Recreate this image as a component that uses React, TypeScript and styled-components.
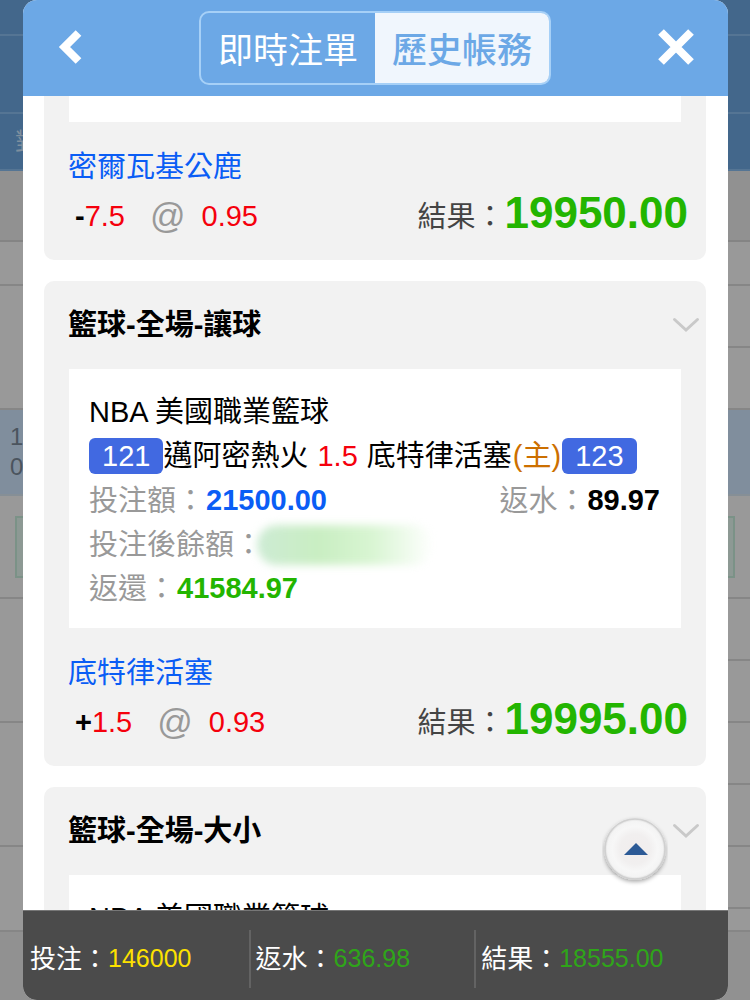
import React from "react";
import styled, { createGlobalStyle } from "styled-components";

const GlobalStyle = createGlobalStyle`
  *, *::before, *::after { box-sizing: border-box; }
  body {
    margin: 0;
    font-family: "Liberation Sans", "Noto Sans CJK TC", sans-serif;
    font-size: 29px;
    line-height: 44px;
    color: #000;
    background: #999;
  }
  button { font: inherit; color: inherit; padding: 0; border: 0; background: none; cursor: pointer; }
  h2, p, dl, dd, dt { margin: 0; font-size: inherit; font-weight: inherit; }
`;

const Screen = styled.div`
  position: relative;
  height: 100vh;
  overflow: hidden;
`;

/* Dimmed page behind the dialog */
const Backdrop = styled.div`
  display: grid;
  grid-template-columns: 1fr 1fr;
  height: 100%;
  align-items: start;
`;

const BackdropColumn = styled.div`
  display: flex;
  flex-direction: column;
`;

const tones = {
  blue: { bg: "#43678b", line: "#557594" },
  grey: { bg: "#919191", line: "#848484" },
  plain: { bg: "#999999", line: "#868686" },
  picked: { bg: "#808e9d", line: "#868f96" },
};

const BackdropRow = styled.div<{ $height: number; $tone: keyof typeof tones }>`
  display: flex;
  flex-direction: column;
  justify-content: center;
  align-items: flex-start;
  height: ${(p) => p.$height}px;
  background: ${(p) => tones[p.$tone].bg};
  border-bottom: 2px solid ${(p) => tones[p.$tone].line};
  font-size: 24px;
  line-height: 30px;
  color: #4b545e;
`;

const BackdropText = styled.span<{ $indent: number; $faded?: boolean }>`
  margin-left: ${(p) => p.$indent}px;
  white-space: nowrap;
  color: ${(p) => (p.$faded ? "#7f8f9e" : "inherit")};
`;

const BackdropBox = styled.div`
  align-self: stretch;
  height: 62px;
  margin: 0 15px;
  border: 2px solid #7b9287;
  background: #8d9994;
`;

const Dialog = styled.section`
  position: absolute;
  inset: 0 22px 0 23px;
  display: flex;
  flex-direction: column;
  overflow: hidden;
  border-radius: 14px;
  background: #fff;
`;

const Header = styled.header`
  display: grid;
  grid-template-columns: 1fr auto 1fr;
  align-items: center;
  flex: none;
  height: 96px;
  padding: 0 33px 0 32px;
  background: #6ca8e6;
`;

const IconButton = styled.button<{ $end?: boolean }>`
  display: flex;
  justify-self: ${(p) => (p.$end ? "end" : "start")};
`;

const Segments = styled.div`
  display: flex;
  height: 74px;
  border: 2px solid #a6d0f7;
  border-radius: 10px;
  overflow: hidden;
`;

const Segment = styled.button<{ $active?: boolean }>`
  width: 174px;
  padding-top: 6px;
  font-size: 35px;
  font-weight: ${(p) => (p.$active ? 500 : 400)};
  color: ${(p) => (p.$active ? "#6ca8e6" : "#fff")};
  background: ${(p) => (p.$active ? "#f0f6fd" : "transparent")};
`;

const List = styled.main`
  display: flex;
  flex-direction: column;
  flex: 1;
  gap: 21px;
  min-height: 0;
  padding: 0 22px 0 21px;
  overflow: hidden;
`;

const Card = styled.article<{ $cut?: boolean }>`
  flex: none;
  border-radius: ${(p) => (p.$cut ? "0 0 10px 10px" : "10px")};
  background: #f2f2f2;
`;

const CardHead = styled.div`
  display: flex;
  align-items: center;
  justify-content: space-between;
  height: 88px;
  padding: 0 6px 0 24px;
`;

const CardTitle = styled.h2`
  font-weight: 700;
`;

const Panel = styled.div`
  min-height: 26px;
  margin: 0 25px;
  background: #fff;
`;

const PanelBody = styled.div`
  padding: 21px 21px 18px 20px;
`;

const Red = styled.span`
  color: #f5000c;
`;

const Home = styled.span`
  margin: 0 1px;
  color: #cc6f00;
`;

const Match = styled.p`
  display: flex;
  align-items: center;
  white-space: pre;
  ${Red} { margin: 0 1px; }
`;

const Badge = styled.span`
  height: 36px;
  padding: 0 13px;
  border-radius: 6px;
  background: #4169e1;
  color: #fff;
  line-height: 36px;
`;

const Line = styled.dl`
  display: flex;
  justify-content: space-between;
  height: 44px;
`;

const Pair = styled.div`
  display: flex;
`;

const Term = styled.dt`
  padding-top: 1px;
  color: #999;
`;

const Value = styled.dd<{ $color?: string }>`
  padding-left: 1px;
  font-weight: 700;
  color: ${(p) => p.$color || "#000"};
`;

const HiddenAmount = styled.dd`
  width: 176px;
  height: 40px;
  margin: 3px 0 1px -6px;
  border-radius: 20px;
  background: linear-gradient(90deg, #cdebd4 0%, #c9eec2 35%, #d8f5d2 65%, #ffffff 100%);
  filter: blur(4px);
`;

const Pick = styled.div`
  margin-top: 22px;
  padding: 0 18px 18px 24px;
`;

const Team = styled.p`
  height: 44px;
  padding-top: 1px;
  color: #0a5df5;
`;

const OddsRow = styled.div`
  display: flex;
  align-items: center;
  justify-content: space-between;
  height: 54px;
  padding-left: 7px;
`;

const Odds = styled.div`
  display: flex;
  align-items: center;
  padding-top: 2px;
`;

const At = styled.span`
  margin: 0 16px 0 25px;
  font-size: 35px;
  color: #999;
`;

const Result = styled.div`
  display: flex;
  align-items: center;
  color: #444;
`;

const ResultLabel = styled.span`
  padding-top: 3px;
`;

const ResultValue = styled.strong`
  padding-bottom: 4px;
  font-size: 44px;
  color: #23b500;
`;

const ToTop = styled.button`
  position: absolute;
  right: 60px;
  bottom: 112px;
  display: flex;
`;

const Totals = styled.footer`
  display: grid;
  grid-template-columns: 32% 32% 1fr;
  flex: none;
  height: 90px;
  padding: 19px 0 12px;
  border-top: 1px solid #777;
  background: #4b4b4b;
`;

const Total = styled.p<{ $color: string }>`
  display: flex;
  align-items: center;
  padding-left: 7px;
  font-size: 26px;
  color: #fff;
  & + & { padding-left: 5px; border-left: 2px solid #636363; }
  output { font-size: 25px; padding-bottom: 2px; color: ${(p) => p.$color}; }
`;

const ChevronDown = () => (
  <svg width="28" height="18" viewBox="0 0 28 18" fill="none" stroke="#c9c9c9" strokeWidth="3" strokeLinecap="round">
    <path d="M2.5 3.5 14 14 25.5 3.5" />
  </svg>
);

function CardHeading({ title }: { title: string }) {
  return (
    <CardHead>
      <CardTitle>{title}</CardTitle>
      <IconButton aria-label="展開">
        <ChevronDown />
      </IconButton>
    </CardHead>
  );
}

type PickProps = { team: string; sign: string; line: string; odds: string; result: string };

function PickSummary({ team, sign, line, odds, result }: PickProps) {
  return (
    <Pick>
      <Team>{team}</Team>
      <OddsRow>
        <Odds>
          <b>{sign}</b>
          <Red>{line}</Red>
          <At>@</At>
          <Red>{odds}</Red>
        </Odds>
        <Result>
          <ResultLabel>結果：</ResultLabel>
          <ResultValue>{result}</ResultValue>
        </Result>
      </OddsRow>
    </Pick>
  );
}

function PageBehind() {
  return (
    <Backdrop aria-hidden="true">
      <BackdropColumn>
        <BackdropRow $height={36} $tone="blue" />
        <BackdropRow $height={78} $tone="blue" />
        <BackdropRow $height={57} $tone="blue">
          <BackdropText $indent={15} $faded>對</BackdropText>
        </BackdropRow>
        <BackdropRow $height={71} $tone="grey" />
        <BackdropRow $height={44} $tone="plain" />
        <BackdropRow $height={124} $tone="plain" />
        <BackdropRow $height={86} $tone="picked">
          <BackdropText $indent={10}>1</BackdropText>
          <BackdropText $indent={10}>0</BackdropText>
        </BackdropRow>
        <BackdropRow $height={103} $tone="plain">
          <BackdropBox />
        </BackdropRow>
        <BackdropRow $height={124} $tone="plain" />
        <BackdropRow $height={124} $tone="plain" />
        <BackdropRow $height={85} $tone="plain" />
        <BackdropRow $height={70} $tone="grey" />
      </BackdropColumn>
      <BackdropColumn>
        <BackdropRow $height={36} $tone="blue" />
        <BackdropRow $height={78} $tone="blue" />
        <BackdropRow $height={57} $tone="blue" />
        <BackdropRow $height={71} $tone="grey" />
        <BackdropRow $height={44} $tone="plain" />
        <BackdropRow $height={62} $tone="plain" />
        <BackdropRow $height={62} $tone="plain" />
        <BackdropRow $height={86} $tone="picked" />
        <BackdropRow $height={103} $tone="plain">
          <BackdropBox />
        </BackdropRow>
        <BackdropRow $height={62} $tone="plain" />
        <BackdropRow $height={62} $tone="plain" />
        <BackdropRow $height={62} $tone="plain" />
        <BackdropRow $height={62} $tone="plain" />
        <BackdropRow $height={62} $tone="plain" />
        <BackdropRow $height={23} $tone="plain" />
        <BackdropRow $height={70} $tone="grey" />
      </BackdropColumn>
    </Backdrop>
  );
}

export default function App() {
  return (
    <>
      <GlobalStyle />
      <Screen>
        <PageBehind />
        <Dialog role="dialog" aria-label="歷史帳務">
          <Header>
            <IconButton aria-label="返回">
              <svg width="30" height="40" viewBox="0 0 30 40" fill="none" stroke="#fff" strokeWidth="8">
                <path d="M23.5 5 9.5 19 23.5 33" />
              </svg>
            </IconButton>
            <Segments>
              <Segment>即時注單</Segment>
              <Segment $active>歷史帳務</Segment>
            </Segments>
            <IconButton $end aria-label="關閉">
              <svg width="40" height="40" viewBox="0 0 40 40" fill="none" stroke="#fff" strokeWidth="8">
                <path d="M6 4 36 34M36 4 6 34" />
              </svg>
            </IconButton>
          </Header>
          <List>
            <Card $cut>
              <Panel />
              <PickSummary team="密爾瓦基公鹿" sign="-" line="7.5" odds="0.95" result="19950.00" />
            </Card>
            <Card>
              <CardHeading title="籃球-全場-讓球" />
              <Panel>
                <PanelBody>
                  <p>NBA 美國職業籃球</p>
                  <Match>
                    <Badge>121</Badge>
                    <span>邁阿密熱火 <Red>1.5</Red> 底特律活塞<Home>(主)</Home></span>
                    <Badge>123</Badge>
                  </Match>
                  <Line>
                    <Pair>
                      <Term>投注額：</Term>
                      <Value $color="#0a5df5">21500.00</Value>
                    </Pair>
                    <Pair>
                      <Term>返水：</Term>
                      <Value>89.97</Value>
                    </Pair>
                  </Line>
                  <Line>
                    <Pair>
                      <Term>投注後餘額：</Term>
                      <HiddenAmount />
                    </Pair>
                  </Line>
                  <Line>
                    <Pair>
                      <Term>返還：</Term>
                      <Value $color="#23b500">41584.97</Value>
                    </Pair>
                  </Line>
                </PanelBody>
              </Panel>
              <PickSummary team="底特律活塞" sign="+" line="1.5" odds="0.93" result="19995.00" />
            </Card>
            <Card>
              <CardHeading title="籃球-全場-大小" />
              <Panel>
                <PanelBody>
                  <p>NBA 美國職業籃球</p>
                </PanelBody>
              </Panel>
            </Card>
          </List>
          <ToTop aria-label="回到頂部">
            <svg width="66" height="72" viewBox="0 0 66 72">
              <defs>
                <radialGradient id="knob" cx="50%" cy="50%" r="50%">
                  <stop offset="0" stopColor="#f1eded" />
                  <stop offset="0.5" stopColor="#f1efef" />
                  <stop offset="0.75" stopColor="#f7f7f7" />
                  <stop offset="0.92" stopColor="#f4f4f4" />
                  <stop offset="1" stopColor="#dedede" />
                </radialGradient>
                <filter id="knobShadow" x="-20%" y="-20%" width="140%" height="140%">
                  <feDropShadow dx="0" dy="2" stdDeviation="2" floodColor="#000" floodOpacity="0.35" />
                </filter>
              </defs>
              <circle cx="33" cy="33" r="30" fill="url(#knob)" stroke="#d0d0d0" strokeWidth="1.5" filter="url(#knobShadow)" />
              <path d="M22 39 34 27 46 39Z" fill="#2c5a96" />
            </svg>
          </ToTop>
          <Totals>
            <Total $color="#fde100">投注：<output>146000</output></Total>
            <Total $color="#2fa519">返水：<output>636.98</output></Total>
            <Total $color="#2fa519">結果：<output>18555.00</output></Total>
          </Totals>
        </Dialog>
      </Screen>
    </>
  );
}
